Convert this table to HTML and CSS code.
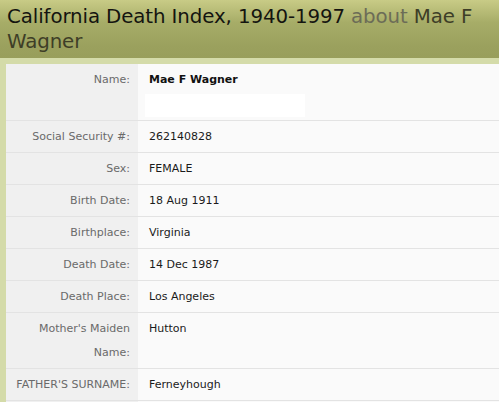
FILE: index.html
```html
<!DOCTYPE html>
<html>
<head>
<meta charset="utf-8">
<link rel="stylesheet" href="styles.css">
</head>
<body>
<div class="page">
  <h1 class="title">California Death Index, 1940-1997 <span class="about">about</span> <span class="who">Mae F Wagner</span></h1>
  <div class="frame">
    <table class="rec">
      <tr><th>Name:</th><td><b>Mae F Wagner</b><div class="blank"></div></td></tr>
      <tr><th>Social Security #:</th><td>262140828</td></tr>
      <tr><th>Sex:</th><td>FEMALE</td></tr>
      <tr><th>Birth Date:</th><td>18 Aug 1911</td></tr>
      <tr><th>Birthplace:</th><td>Virginia</td></tr>
      <tr><th>Death Date:</th><td>14 Dec 1987</td></tr>
      <tr><th>Death Place:</th><td>Los Angeles</td></tr>
      <tr><th>Mother's Maiden Name:</th><td>Hutton</td></tr>
      <tr><th>FATHER'S SURNAME:</th><td>Ferneyhough</td></tr>
      <tr><th>&nbsp;</th><td>&nbsp;</td></tr>
    </table>
  </div>
</div>
</body>
</html>
```
FILE: styles.css
```css
html, body { margin: 0; padding: 0; background: #fff; }
.page { width: 499px; height: 402px; overflow: hidden; }
.title {
  margin: 0;
  padding: 4px 7px 5px 7px;
  font-family: "DejaVu Sans", Verdana, sans-serif;
  font-weight: normal;
  font-size: 19.8px;
  line-height: 25px;
  letter-spacing: -0.1px;
  color: #141410;
  background: linear-gradient(#c8cb86 0px, #a7ad68 22px, #9ba15e 45px, #989e5b 100%);
  height: 49px;
}
.about { color: #6c6c57; }
.who { color: #3e3e27; }
.frame {
  border-top: 6px solid #d4dba9;
  border-left: 6px solid #d4dba9;
  background: #fafafa;
}
.rec {
  border-collapse: collapse;
  width: 100%;
  font-family: "DejaVu Sans", Verdana, sans-serif;
  font-size: 11px;
  line-height: 24px;
}
.rec th, .rec td {
  padding: 4px 0 3px 0;
  border-bottom: 1px solid #e3e3e3;
  vertical-align: top;
}
.rec th {
  width: 124px;
  padding-right: 8px;
  text-align: right;
  font-weight: normal;
  color: #6a6a6a;
  background: #f0f0f0;
}
.rec td {
  padding-left: 11px;
  color: #1a1a1a;
}
.rec td b { color: #111; }
.blank {
  width: 160px;
  height: 23px;
  margin: 2px 0 0 -4px;
  background: #fff;
}
```
